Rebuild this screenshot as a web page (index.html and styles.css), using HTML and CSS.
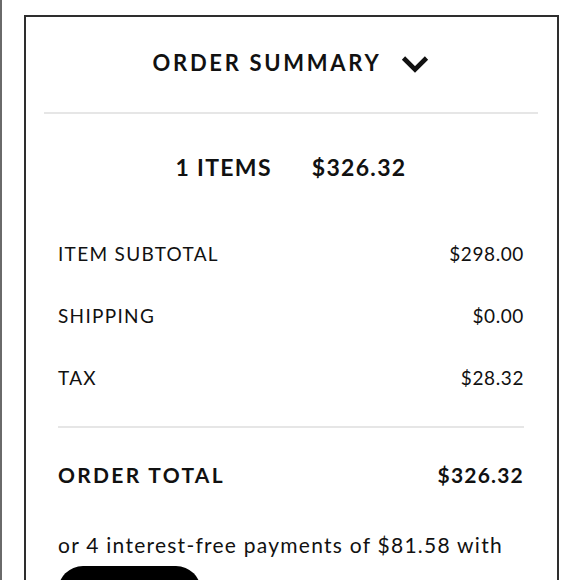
FILE: index.html
```html
<!DOCTYPE html>
<html>
<head>
<meta charset="utf-8">
<link rel="stylesheet" href="styles.css">
</head>
<body>
<div class="page">
  <section class="card">
    <header class="header">
      <h1 class="title">ORDER SUMMARY</h1>
      <svg class="chevron" width="28" height="18" viewBox="0 0 28 18"><polyline points="2.5,3 14,14.5 25.5,3" fill="none" stroke="#111" stroke-width="4.6" stroke-linecap="butt" stroke-linejoin="miter"/></svg>
    </header>
    <hr class="divider">
    <div class="items">
      <span>1 ITEMS</span>
      <span>$326.32</span>
    </div>
    <div class="rows">
      <div class="row"><span class="label">ITEM SUBTOTAL</span><span>$298.00</span></div>
      <div class="row"><span class="label">SHIPPING</span><span>$0.00</span></div>
      <div class="row"><span class="label">TAX</span><span>$28.32</span></div>
      <hr class="divider inner">
      <div class="row total"><span class="label">ORDER TOTAL</span><span>$326.32</span></div>
      <p class="installments">or 4 interest-free payments of $81.58 with</p>
      <div class="pay-button"></div>
    </div>
  </section>
</div>
</body>
</html>
```
FILE: styles.css
```css
* { box-sizing: border-box; }
html, body { margin: 0; padding: 0; background: #fff; }
body { font-family: Lato, "Noto Sans", sans-serif; color: #111; overflow: hidden; }
.page {
  height: 580px;
  border-left: 2px solid #6a6a6a;
  padding: 15px 0 0 22px;
}
.card {
  width: 535px;
  height: 600px;
  border: 2px solid #2e2e2e;
  padding: 0 19px 0 18px;
}
.header {
  display: flex;
  justify-content: center;
  align-items: center;
  gap: 20px;
  padding: 32px 0 35px;
  height: 95px;
}
.title {
  margin: 0;
  font-size: 22px;
  line-height: 28px;
  font-weight: 700;
  letter-spacing: 2.7px;
}
.chevron { display: block; margin-top: 1px; }
.divider {
  margin: 0;
  border: 0;
  border-top: 2px solid #e6e6e6;
}
.items {
  display: flex;
  justify-content: center;
  gap: 40px;
  padding-top: 38px;
  font-size: 23px;
  line-height: 30px;
  font-weight: 700;
  letter-spacing: 1.3px;
}
.rows { padding: 60px 14px 0; }
.row {
  display: flex;
  justify-content: space-between;
  font-size: 19px;
  line-height: 24px;
  letter-spacing: 0.6px;
  margin-bottom: 38px;
}
.row .label { letter-spacing: 1.3px; }
.row:nth-child(3) { margin-bottom: 36px; }
.divider.inner { margin-bottom: 33px; }
.row.total {
  font-size: 21px;
  line-height: 28px;
  font-weight: 700;
  letter-spacing: 1.2px;
  margin-bottom: 41px;
}
.row.total .label { letter-spacing: 2.3px; }
.installments {
  margin: 0;
  font-size: 21px;
  line-height: 30px;
  letter-spacing: 1.25px;
}
.pay-button {
  margin-top: 6px;
  width: 143px;
  height: 50px;
  border-radius: 25px;
  background: #000;
}
```
